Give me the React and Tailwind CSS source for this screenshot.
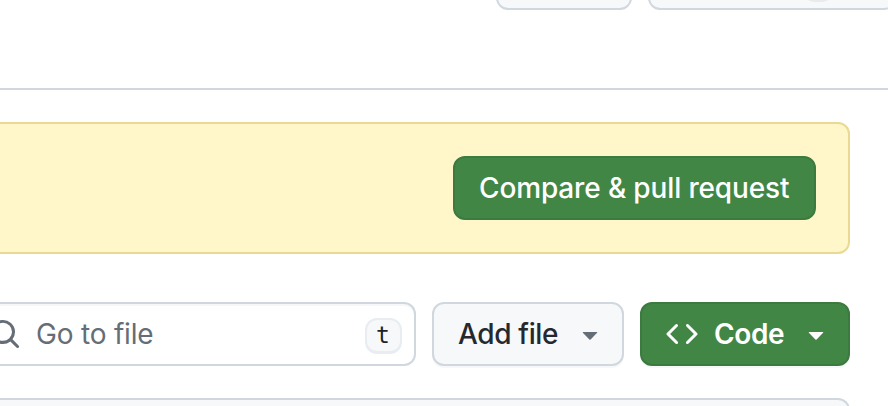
const paths = {
  search:
    'M10.68 11.74a6 6 0 0 1-7.922-8.982 6 6 0 0 1 8.982 7.922l3.04 3.04a.749.749 0 0 1-.326 1.275.749.749 0 0 1-.734-.215ZM11.5 7a4.499 4.499 0 1 0-8.997 0A4.499 4.499 0 0 0 11.5 7Z',
  code: 'm11.28 3.22 4.25 4.25a.75.75 0 0 1 0 1.06l-4.25 4.25a.749.749 0 0 1-1.275-.326.749.749 0 0 1 .215-.734L13.94 8l-3.72-3.72a.749.749 0 0 1 .326-1.275.749.749 0 0 1 .734.215Zm-6.56 0a.751.751 0 0 1 1.042.018.751.751 0 0 1 .018 1.042L2.06 8l3.72 3.72a.749.749 0 0 1-.326 1.275.749.749 0 0 1-.734-.215L.47 8.53a.75.75 0 0 1 0-1.06Z',
  caret:
    'm4.427 7.427 3.396 3.396a.25.25 0 0 0 .354 0l3.396-3.396A.25.25 0 0 0 11.396 7H4.604a.25.25 0 0 0-.177.427Z',
};

function Icon({ name, className = '' }) {
  return (
    <svg viewBox="0 0 16 16" fill="currentColor" aria-hidden="true" className={`size-8 shrink-0 ${className}`}>
      <path d={paths[name]} />
    </svg>
  );
}

function TopActions() {
  return (
    <div className="flex h-[10px] items-end gap-4 overflow-hidden pl-[496px]">
      <div className="h-14 w-[136px] shrink-0 rounded-xl border-2 border-[#d0d7de] bg-[#f6f8fa]" />
      <div className="flex h-14 w-[248px] shrink-0 items-end rounded-xl border-2 border-[#d0d7de] bg-[#f6f8fa] pb-[6px] pl-[148px]">
        <span className="h-9 w-10 rounded-full bg-[#e8ebee]" />
      </div>
    </div>
  );
}

function Notice() {
  return (
    <section className="mr-[38px] flex h-[132px] items-center justify-end rounded-r-xl border-2 border-l-0 border-[#ead992] bg-[#fff7ca] pr-8">
      <button className="flex h-16 w-[363px] items-center rounded-xl border-2 border-[#3c7a40] bg-[#428646] pl-6 text-[28px] font-medium tracking-[-0.14px] whitespace-nowrap text-white">
        Compare &amp; pull request
      </button>
    </section>
  );
}

function Toolbar() {
  return (
    <div className="mr-[38px] flex h-16 gap-4">
      <div className="flex flex-1 items-center rounded-r-xl border-2 border-l-0 border-[#d0d7de] bg-white pr-3 text-[#656d76] shadow-[inset_0_2px_0_#f6f7f8]">
        <Icon name="search" className="-ml-[11px]" />
        <span className="ml-[15px] text-[28px] tracking-[-0.2px] whitespace-nowrap">Go to file</span>
        <kbd className="mt-[3px] ml-auto flex h-9 w-[37px] items-center justify-center rounded-xl border-2 border-b-[3px] border-[#e9ecf0] bg-[#f6f8fa] pr-px font-['DejaVu_Sans_Mono',monospace] text-[23px] leading-none text-[#1f2328]">
          t
        </kbd>
      </div>
      <button className="flex w-48 items-center justify-between rounded-xl border-2 border-[#d0d7de] bg-[#f6f8fa] pr-4 pl-6 text-[28px] font-medium tracking-[-0.35px] whitespace-nowrap text-[#25292e] shadow-[0_2px_0_#f7f8f9]">
        Add file
        <Icon name="caret" className="text-[#656d76]" />
      </button>
      <button className="flex w-[210px] items-center rounded-xl border-2 border-[#3c7a40] bg-[#428646] pr-4 pl-6 text-[28px] font-semibold tracking-[-0.4px] text-white shadow-[0_2px_0_#f7f8f9]">
        <Icon name="code" />
        <span className="ml-4">Code</span>
        <Icon name="caret" className="ml-auto" />
      </button>
    </div>
  );
}

export default function App() {
  return (
    <main className="h-[406px] w-[888px] overflow-hidden bg-white font-['Inter','Liberation_Sans',sans-serif]">
      <TopActions />
      <div className="mt-[78px] mb-8 h-[2px] bg-[#d0d7de]" />
      <Notice />
      <div className="h-12" />
      <Toolbar />
      <div className="mt-8 mr-[38px] h-16 rounded-tr-xl border-t-2 border-r-2 border-[#d0d7de] bg-[#f6f8fa]" />
    </main>
  );
}
